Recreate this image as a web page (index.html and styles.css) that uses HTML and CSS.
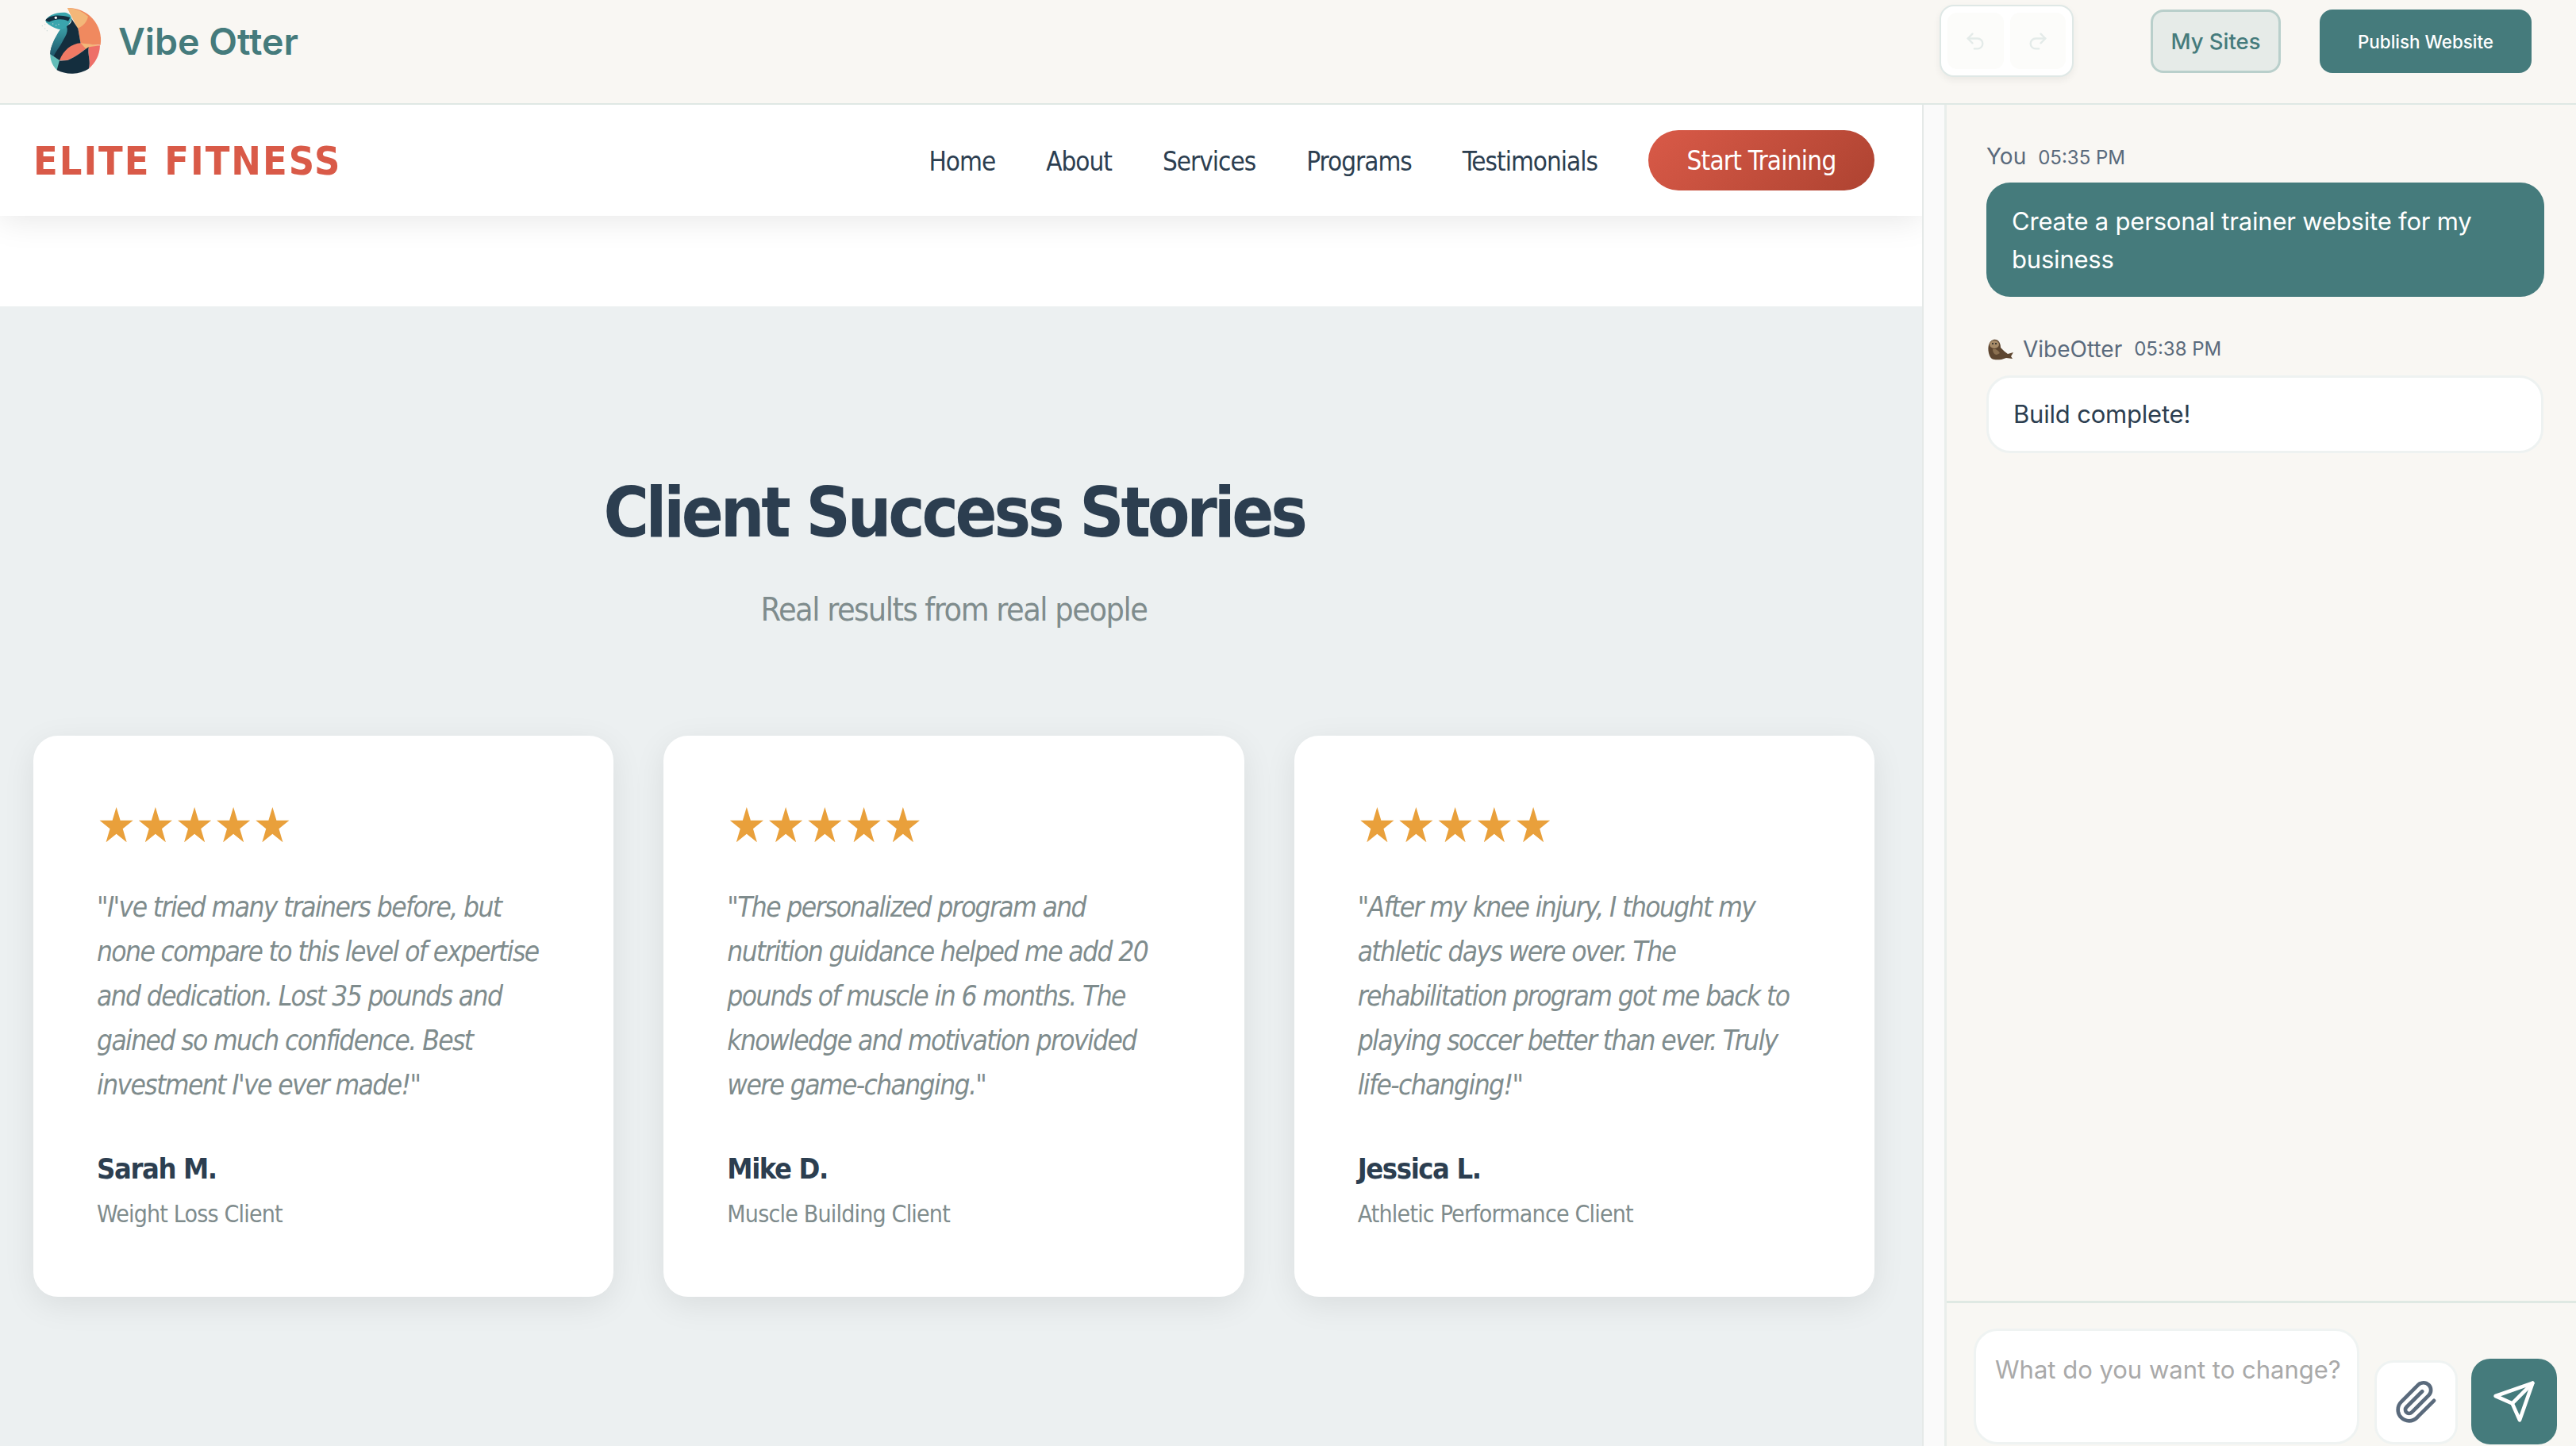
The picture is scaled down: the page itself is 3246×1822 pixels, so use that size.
FILE: index.html
```html
<!DOCTYPE html>
<html lang="en">
<head>
    <meta charset="UTF-8">
    <title>Vibe Otter</title>
    <link rel="stylesheet" href="styles.css">
</head>
<body>
    <div class="app">
        <header class="topbar">
            <div class="brand">
                <svg class="brand-logo" viewBox="0 0 360 330">
                    <defs>
                        <linearGradient id="neck" x1="0" y1="0" x2="0" y2="1">
                            <stop offset="0" stop-color="#3fa8ae"/>
                            <stop offset="1" stop-color="#1d5468"/>
                        </linearGradient>
                    </defs>
                    <path d="M165 30A122 122 0 0 1 290 170L215 165 205 108Z" fill="#f0895f"/>
                    <path d="M165 30A122 122 0 0 1 243 62C238 85 222 100 203 107 190 80 175 55 165 30Z" fill="#f3b779"/>
                    <path d="M100 205C100 170 130 130 145 100 165 100 185 90 180 70L205 108 215 165 135 230Z" fill="#142e3e"/>
                    <path d="M145 90C170 95 170 120 150 150 135 180 120 195 112 215L100 205C100 170 125 130 145 100Z" fill="url(#neck)"/>
                    <path d="M135 228C150 190 180 165 215 163L288 172 245 178C225 190 200 215 165 228Z" fill="#f07a64"/>
                    <path d="M215 163L286 172 236 186Z" fill="#f3b779"/>
                    <path d="M245 178L288 172A122 122 0 0 1 245 260C255 235 240 205 245 178Z" fill="#ee6f68"/>
                    <path d="M125 230L165 228C200 215 225 190 245 178 240 205 255 235 245 260A122 122 0 0 1 125 265Z" fill="#142e3e"/>
                    <path d="M100 205L135 228 125 265C105 245 100 225 100 205Z" fill="#62bcb7"/>
                    <path d="M82 78C90 60 120 45 160 48 180 55 185 70 175 85 160 105 150 115 130 110 110 105 95 95 85 85Z" fill="#3aa5ad"/>
                    <path d="M82 76C95 60 125 52 175 66L168 80C145 68 120 72 102 80 95 84 88 84 82 76Z" fill="#142e3e"/>
                    <circle cx="121" cy="67" r="5" fill="#fff"/>
                    <g fill="#c9d6d4">
                        <circle cx="70" cy="98" r="2"/><circle cx="80" cy="92" r="2"/><circle cx="80" cy="108" r="2"/>
                        <circle cx="88" cy="116" r="2"/><circle cx="110" cy="90" r="2"/><circle cx="122" cy="96" r="2"/><circle cx="132" cy="92" r="2"/>
                    </g>
                </svg>
                <span class="brand-name">Vibe Otter</span>
            </div>
            <div class="actions">
                <div class="history">
                    <button class="history-btn">
                        <svg class="history-icon" viewBox="0 0 24 24"><path d="M9 14 4 9l5-5"/><path d="M4 9h10.5a5.5 5.5 0 0 1 0 11H11"/></svg>
                    </button>
                    <button class="history-btn">
                        <svg class="history-icon" viewBox="0 0 24 24"><path d="m15 14 5-5-5-5"/><path d="M20 9H9.5a5.5 5.5 0 0 0 0 11H13"/></svg>
                    </button>
                </div>
                <button class="my-sites">My Sites</button>
                <button class="publish">Publish Website</button>
            </div>
        </header>

        <div class="workspace">
            <main class="preview">
                <nav class="site-nav">
                    <div class="site-logo">ELITE FITNESS</div>
                    <div class="site-links">
                        <a>Home</a>
                        <a>About</a>
                        <a>Services</a>
                        <a>Programs</a>
                        <a>Testimonials</a>
                        <a class="cta">Start Training</a>
                    </div>
                </nav>
                <section class="stories">
                    <h2>Client Success Stories</h2>
                    <p class="stories-sub">Real results from real people</p>
                    <div class="cards">
                        <article class="card">
                            <div class="stars">★★★★★</div>
                            <p class="quote">"I've tried many trainers before, but none compare to this level of expertise and dedication. Lost 35 pounds and gained so much confidence. Best investment I've ever made!"</p>
                            <div class="client">Sarah M.</div>
                            <div class="client-type">Weight Loss Client</div>
                        </article>
                        <article class="card">
                            <div class="stars">★★★★★</div>
                            <p class="quote">"The personalized program and nutrition guidance helped me add 20 pounds of muscle in 6 months. The knowledge and motivation provided were game-changing."</p>
                            <div class="client">Mike D.</div>
                            <div class="client-type">Muscle Building Client</div>
                        </article>
                        <article class="card">
                            <div class="stars">★★★★★</div>
                            <p class="quote">"After my knee injury, I thought my athletic days were over. The rehabilitation program got me back to playing soccer better than ever. Truly life-changing!"</p>
                            <div class="client">Jessica L.</div>
                            <div class="client-type">Athletic Performance Client</div>
                        </article>
                    </div>
                </section>
            </main>
            <div class="gutter"></div>
            <aside class="chat">
                <div class="messages">
                    <div class="msg-meta"><span class="msg-author">You</span><span class="msg-time">05:35 PM</span></div>
                    <div class="bubble bubble-user">Create a personal trainer website for my business</div>
                    <div class="msg-meta msg-meta-bot">
                        <svg class="otter-icon" viewBox="0 0 36 28">
                            <path d="M4 22C1 14 2 4 9 2c6-1 9 4 9 10 3 3 6 6 9 8l7-2-3 5 2 3-8-1-6 2C10 28 6 27 4 22Z" fill="#5e4630"/>
                            <ellipse cx="10" cy="8" rx="6" ry="5" fill="#a68a68"/>
                            <path d="M8 14c3-1 7 1 9 5l-4 2c-3 0-5-3-5-7Z" fill="#8a6f50"/>
                            <circle cx="8" cy="7" r="1" fill="#222"/><circle cx="12" cy="7" r="1" fill="#222"/>
                        </svg>
                        <span class="msg-author">VibeOtter</span><span class="msg-time">05:38 PM</span>
                    </div>
                    <div class="bubble bubble-bot">Build complete!</div>
                </div>
                <div class="composer">
                    <div class="composer-input">What do you want to change?</div>
                    <button class="attach">
                        <svg class="composer-icon" viewBox="0 0 24 24"><path d="M21.44 11.05l-9.19 9.19a6 6 0 0 1-8.49-8.49l9.19-9.19a4 4 0 0 1 5.66 5.66l-9.2 9.19a2 2 0 0 1-2.83-2.83l8.49-8.48"/></svg>
                    </button>
                    <button class="send">
                        <svg class="composer-icon" viewBox="0 0 24 24"><path d="M22 2 15 22l-4-9-9-4Z"/><path d="M22 2 11 13"/></svg>
                    </button>
                </div>
            </aside>
        </div>
    </div>
</body>
</html>
```
FILE: styles.css
```css
* {
    box-sizing: border-box;
}
body {
    margin: 0;
    background: #f9f7f3;
    font-family: Inter, "Noto Sans", sans-serif;
    overflow: hidden;
}
button {
    font-family: inherit;
    cursor: pointer;
}
.app {
    height: 1822px;
    display: flex;
    flex-direction: column;
    overflow: hidden;
}
.topbar {
    height: 132px;
    flex: none;
    display: flex;
    justify-content: space-between;
    background: #f9f7f3;
    border-bottom: 2px solid #dfe8e4;
}
.brand {
    display: flex;
    align-items: flex-start;
}
.brand-logo {
    width: 120px;
    height: 110px;
    margin-left: 30px;
}
.brand-name {
    margin-left: -1px;
    margin-top: 24px;
    font-size: 46.5px;
    line-height: 57px;
    font-weight: 600;
    color: #457b7c;
}
.actions {
    display: flex;
    align-items: flex-start;
    padding-right: 56px;
}
.history {
    width: 169px;
    height: 91px;
    margin-top: 6px;
    padding: 8px;
    display: flex;
    gap: 8px;
    background: #fff;
    border: 2px solid #dfe8e6;
    border-radius: 18px;
    box-shadow: 0 4px 10px rgba(0, 0, 0, 0.06);
}
.history-btn {
    flex: 1;
    padding: 0;
    display: flex;
    align-items: center;
    justify-content: center;
    background: #fcfcfa;
    border: none;
    border-radius: 12px;
}
.history-icon {
    width: 28px;
    height: 28px;
    fill: none;
    stroke: #e4ebe9;
    stroke-width: 2;
    stroke-linecap: round;
    stroke-linejoin: round;
}
.my-sites {
    width: 164px;
    height: 80px;
    margin: 12px 0 0 97px;
    background: #e6ebe8;
    border: 3px solid #b9cfcb;
    border-radius: 16px;
    color: #457b7c;
    font-size: 27.5px;
    font-weight: 500;
    padding: 0;
}
.publish {
    width: 267px;
    height: 80px;
    margin: 12px 0 0 49px;
    background: #457b7c;
    border: none;
    border-radius: 16px;
    color: #fff;
    font-size: 22.4px;
    font-weight: 500;
    padding: 0;
}
.workspace {
    flex: 1;
    display: flex;
    min-height: 0;
}
.preview {
    width: 2424px;
    flex: none;
    background: #fff;
    border-right: 2px solid #e5e9e8;
    overflow: hidden;
}
.gutter {
    width: 29px;
    flex: none;
    background: #fafafa;
    border-right: 3px solid #e9eeeb;
}
.site-nav {
    height: 140px;
    position: relative;
    display: flex;
    align-items: center;
    justify-content: space-between;
    padding: 2px 60px 0 42px;
    background: #fff;
    box-shadow: 0 4px 40px rgba(0, 0, 0, 0.1);
}
.site-logo,
.site-links,
.stories {
    font-family: "DejaVu Sans Condensed", "DejaVu Sans", sans-serif;
}
.site-logo {
    font-size: 50px;
    font-weight: 700;
    color: #d95a48;
    letter-spacing: 2px;
}
.site-links {
    display: flex;
    align-items: center;
    gap: 64px;
    font-size: 33px;
    color: #2c3e50;
    letter-spacing: -1px;
}
.cta {
    width: 285px;
    height: 76px;
    margin-top: -2px;
    display: flex;
    align-items: center;
    justify-content: center;
    background: linear-gradient(135deg, #d95a48, #ae4331);
    border-radius: 38px;
    color: #fff;
    letter-spacing: -0.75px;
}
.stories {
    height: 1550px;
    margin-top: 114px;
    padding: 208px 60px 0 42px;
    background: #ecf0f1;
    text-align: center;
}
.stories h2 {
    margin: 0;
    font-size: 87px;
    line-height: 105px;
    font-weight: 700;
    color: #2c3e50;
    letter-spacing: -4.2px;
}
.stories-sub {
    margin: 44px 0 0;
    font-size: 41px;
    line-height: 50px;
    color: #7f8c8d;
    letter-spacing: -1.5px;
}
.cards {
    display: grid;
    grid-template-columns: repeat(3, 1fr);
    gap: 63px;
    margin-top: 134px;
    text-align: left;
}
.card {
    height: 707px;
    padding: 80px;
    background: #fff;
    border-radius: 31px;
    box-shadow: 0 10px 40px rgba(0, 0, 0, 0.08);
}
.stars {
    font-size: 61px;
    line-height: 66px;
    color: #e9a03b;
}
.quote {
    margin: 42px 0 0;
    font-size: 35px;
    line-height: 56px;
    font-style: italic;
    color: #7f8c8d;
    letter-spacing: -1.6px;
}
.client {
    margin-top: 53px;
    font-size: 36px;
    line-height: 50px;
    font-weight: 700;
    color: #2c3e50;
    letter-spacing: -1.4px;
}
.client-type {
    margin-top: 14px;
    font-size: 30px;
    line-height: 36px;
    color: #7f8c8d;
    letter-spacing: -0.8px;
}
.chat {
    flex: 1;
    display: flex;
    flex-direction: column;
    background: #f9f7f3;
}
.messages {
    flex: 1;
    padding: 48px 40px 0 50px;
}
.msg-meta {
    display: flex;
    align-items: baseline;
    height: 50px;
    color: #5a6a7c;
}
.msg-meta-bot {
    margin-top: 40px;
    height: 59px;
    padding-bottom: 8px;
    align-items: center;
}
.msg-author {
    font-size: 28px;
}
.msg-time {
    margin-left: 15px;
    font-size: 24px;
}
.otter-icon {
    width: 36px;
    height: 28px;
    margin-right: 10px;
}
.bubble {
    font-size: 31px;
    line-height: 48px;
    letter-spacing: -0.2px;
    border-radius: 30px;
}
.bubble-user {
    height: 144px;
    padding: 25px 32px;
    background: #457b7c;
    color: #fff;
}
.bubble-bot {
    height: 98px;
    margin-right: 1px;
    padding: 22px 31px;
    background: #fff;
    border: 3px solid #eef2f1;
    color: #2c3e50;
}
.composer {
    height: 183px;
    flex: none;
    display: flex;
    align-items: flex-end;
    padding: 0 24px 2px 34px;
    background: #f8f7f3;
    border-top: 3px solid #dfe9e3;
}
.composer-input {
    width: 486px;
    height: 146px;
    padding: 25px 24px;
    background: #fff;
    border: 3px solid #eff3f2;
    border-radius: 30px;
    color: #a9a9a9;
    font-size: 31px;
    line-height: 48px;
    white-space: nowrap;
}
.attach {
    width: 105px;
    height: 106px;
    margin-left: 19px;
    padding: 0;
    display: flex;
    align-items: center;
    justify-content: center;
    background: #fff;
    border: 3px solid #eff3f2;
    border-radius: 24px;
    color: #5a6a7c;
}
.send {
    width: 108px;
    height: 108px;
    margin-left: 17px;
    padding: 0;
    display: flex;
    align-items: center;
    justify-content: center;
    background: #457b7c;
    border: none;
    border-radius: 24px;
    color: #fff;
}
.composer-icon {
    width: 56px;
    height: 56px;
    fill: none;
    stroke: currentColor;
    stroke-width: 2;
    stroke-linecap: round;
    stroke-linejoin: round;
}
```
